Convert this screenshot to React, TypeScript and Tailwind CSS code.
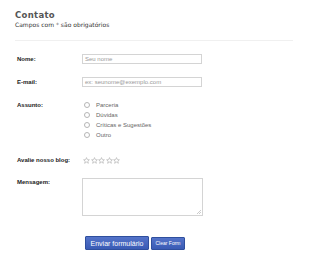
import React from 'react';

const assuntos = ['Parceria', 'Dúvidas', 'Críticas e Sugestões', 'Outro'];

function Star() {
  return (
    <svg width="7" height="7" viewBox="0 0 24 24" fill="none" stroke="#a8a8a8" strokeWidth="2" strokeLinejoin="round">
      <polygon points="12,2 15,9 22,9.5 16.5,14 18.5,21.5 12,17.5 5.5,21.5 7.5,14 2,9.5 9,9" />
    </svg>
  );
}

export default function App() {
  const label = "w-[67px] shrink-0 pl-[2px] text-[6px] font-bold text-[#222] font-['Liberation_Sans',Arial,sans-serif]";
  const input =
    "w-[120px] h-[10px] border border-[#d4d4d4] bg-white px-[2px] text-[6px] leading-[8px] text-[#999] font-['Liberation_Sans',Arial,sans-serif]";

  return (
    <div className="w-[310px] h-[261px] bg-white px-[15px] pt-[10px]">
      <h2 className="text-[8.5px] leading-[10px] font-bold tracking-[0.3px] text-[#555] font-['DejaVu_Sans',Verdana,sans-serif]">
        Contato
      </h2>
      <p className="mt-[1px] text-[6px] leading-[8px] text-[#333] font-['DejaVu_Sans',Verdana,sans-serif]">
        Campos com <span className="text-[#777]">*</span> são obrigatórios
      </p>
      <div className="mt-[11px] h-px w-[278px] bg-[#f0f0f0]" />

      <div className="mt-[13px] flex items-center">
        <span className={label}>Nome:</span>
        <div className={input}>Seu nome</div>
      </div>

      <div className="mt-[13px] flex items-center">
        <span className={label}>E-mail:</span>
        <div className={input}>ex: seunome@exemplo.com</div>
      </div>

      <div className="mt-[13px] flex items-start">
        <span className={label + ' leading-[10px]'}>Assunto:</span>
        <div className="flex flex-col">
          {assuntos.map((a) => (
            <div key={a} className="flex h-[10px] items-center pl-[2px]">
              <span className="h-[6px] w-[6px] rounded-full border border-[#b5b5b5] bg-white" />
              <span className="ml-[6px] text-[6px] text-[#666] font-['Liberation_Sans',Arial,sans-serif]">{a}</span>
            </div>
          ))}
        </div>
      </div>

      <div className="mt-[15px] flex h-[10px] items-center">
        <span className={label}>Avalie nosso blog:</span>
        <div className="flex gap-[0.5px] pl-[1px]">
          <Star />
          <Star />
          <Star />
          <Star />
          <Star />
        </div>
      </div>

      <div className="mt-[13px] flex items-start">
        <span className={label + ' leading-[9px]'}>Mensagem:</span>
        <div className="relative h-[38px] w-[121px] border border-[#d4d4d4] bg-white">
          <svg className="absolute bottom-[1px] right-[1px]" width="4" height="4" viewBox="0 0 4 4" stroke="#aaa" strokeWidth="0.6">
            <line x1="0" y1="4" x2="4" y2="0" />
            <line x1="2" y1="4" x2="4" y2="2" />
          </svg>
        </div>
      </div>

      <div className="mt-[20px] flex items-end gap-[2px] pl-[70px] font-['Liberation_Sans',Arial,sans-serif]">
        <button className="h-[14px] w-[64px] rounded-[1px] border border-[#2f4f9e] bg-gradient-to-b from-[#5473c9] to-[#3a5bb5] text-[7px] leading-none text-white">
          Enviar formulário
        </button>
        <button className="h-[13px] w-[34px] rounded-[1px] border border-[#2f4f9e] bg-gradient-to-b from-[#5473c9] to-[#3a5bb5] text-[5px] leading-none text-white">
          Clear Form
        </button>
      </div>
    </div>
  );
}
